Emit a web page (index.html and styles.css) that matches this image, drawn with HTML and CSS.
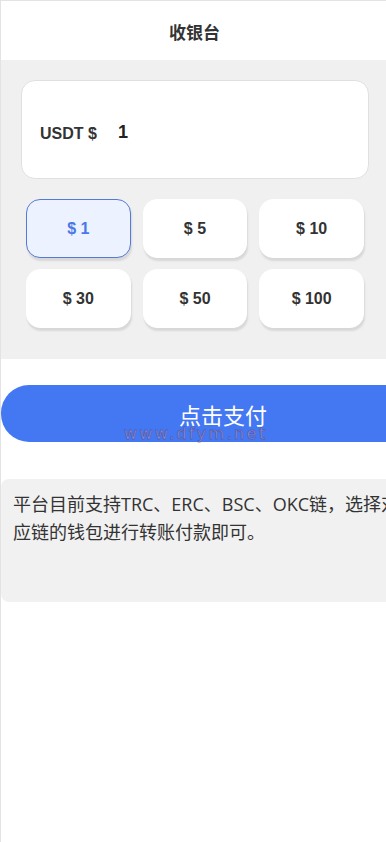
FILE: index.html
```html
<!DOCTYPE html>
<html lang="zh-CN">
<head>
<meta charset="utf-8">
<title>收银台</title>
<link rel="stylesheet" href="styles.css">
</head>
<body>
<div class="page">
  <header class="header">收银台</header>
  <section class="panel">
    <div class="amount-card">
      <span class="amount-label">USDT $</span>
      <span class="amount-value">1</span>
    </div>
    <div class="options">
      <div class="option active">$ 1</div>
      <div class="option">$ 5</div>
      <div class="option">$ 10</div>
      <div class="option">$ 30</div>
      <div class="option">$ 50</div>
      <div class="option">$ 100</div>
    </div>
  </section>
  <div class="pay-wrap">
    <div class="pay-btn">点击支付</div>
    <div class="watermark">www.dfym.net</div>
  </div>
  <div class="info">平台目前支持TRC、ERC、BSC、OKC链，选择对<br>应链的钱包进行转账付款即可。</div>
</div>
</body>
</html>
```

FILE: styles.css
```css
html, body {
  margin: 0;
  padding: 0;
  overflow: hidden;
  background: #fff;
}
.page {
  width: 388px;
  min-height: 842px;
  border-top: 1px solid #e3e3e3;
  border-left: 1px solid #e3e3e3;
  box-sizing: border-box;
  font-family: "Noto Sans CJK SC", "Liberation Sans", sans-serif;
}
.header {
  height: 59px;
  display: flex;
  align-items: center;
  justify-content: center;
  font-size: 17px;
  font-weight: bold;
  color: #333;
  padding-top: 2px;
  box-sizing: border-box;
}
.panel {
  width: 388px;
  background: #f0f0f0;
  padding: 20px 20px 31px;
  box-sizing: border-box;
}
.amount-card {
  height: 99px;
  background: #fff;
  border: 1px solid #e0e0e0;
  border-radius: 14px;
  box-sizing: border-box;
  display: flex;
  align-items: center;
  padding-left: 18px;
  padding-top: 8px;
}
.amount-label {
  font-family: "Liberation Sans", Arial, sans-serif;
  font-weight: bold;
  font-size: 16px;
  color: #333;
}
.amount-value {
  font-family: "Liberation Sans", Arial, sans-serif;
  font-weight: bold;
  font-size: 18px;
  color: #222;
  margin-left: 21px;
  margin-top: -3px;
}
.options {
  margin: 20px 5px 0;
  display: grid;
  grid-template-columns: repeat(3, 1fr);
  column-gap: 12px;
  row-gap: 11px;
}
.option {
  height: 59px;
  background: #fff;
  border: 1px solid #fff;
  border-radius: 14px;
  box-sizing: border-box;
  display: flex;
  align-items: center;
  justify-content: center;
  font-family: "Liberation Sans", Arial, sans-serif;
  font-weight: bold;
  font-size: 16px;
  color: #333;
  box-shadow: 1px 3px 2px rgba(0, 0, 0, 0.1);
}
.option.active {
  background: #ecf2ff;
  border-color: #5579d6;
  color: #4a78e6;
}
.pay-wrap {
  position: relative;
  margin-top: 26px;
}
.pay-btn {
  width: 444px;
  height: 57px;
  background: #4477f2;
  border-radius: 28px 0 0 28px;
  color: #fff;
  font-size: 22px;
  display: flex;
  align-items: center;
  justify-content: center;
}
.watermark {
  position: absolute;
  left: 123px;
  top: 39px;
  font-family: "DejaVu Sans", Verdana, sans-serif;
  font-size: 16px;
  line-height: 19px;
  letter-spacing: 2.4px;
  color: rgba(175, 175, 225, 0.75);
  -webkit-text-stroke: 0.9px rgba(80, 80, 160, 0.7);
}
.info {
  width: 470px;
  min-height: 123px;
  margin-top: 37px;
  background: #f1f1f1;
  border-radius: 8px 0 0 8px;
  box-sizing: border-box;
  padding: 11px 12px;
  font-family: "Open Sans", "Noto Sans CJK SC", sans-serif;
  font-size: 18px;
  line-height: 28px;
  color: #333;
}
```
